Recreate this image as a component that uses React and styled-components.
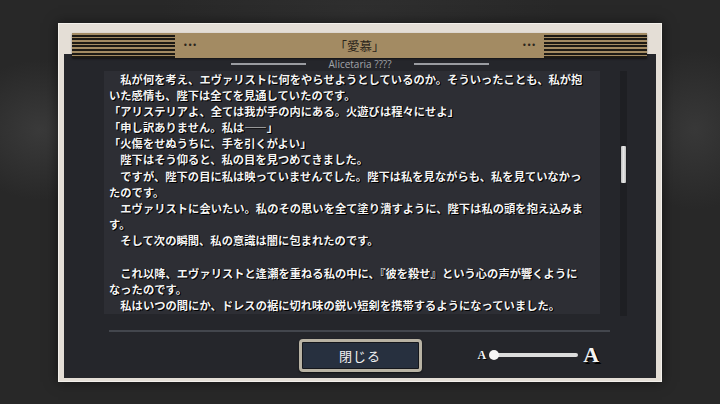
import React from "react";
import styled, { createGlobalStyle } from "styled-components";

const lines = [
  "　私が何を考え、エヴァリストに何をやらせようとしているのか。そういったことも、私が抱",
  "いた感情も、陛下は全てを見通していたのです。",
  "「アリステリアよ、全ては我が手の内にある。火遊びは程々にせよ」",
  "「申し訳ありません。私は――」",
  "「火傷をせぬうちに、手を引くがよい」",
  "　陛下はそう仰ると、私の目を見つめてきました。",
  "　ですが、陛下の目に私は映っていませんでした。陛下は私を見ながらも、私を見ていなかっ",
  "たのです。",
  "　エヴァリストに会いたい。私のその思いを全て塗り潰すように、陛下は私の頭を抱え込みま",
  "す。",
  "　そして次の瞬間、私の意識は闇に包まれたのです。",
  "",
  "　これ以降、エヴァリストと逢瀬を重ねる私の中に、『彼を殺せ』という心の声が響くように",
  "なったのです。",
  "　私はいつの間にか、ドレスの裾に切れ味の鋭い短剣を携帯するようになっていました。",
];

const App = () => {
  return (
    <Page>
      <GlobalStyle />
      <Frame>
        <TitleBar>
          <Stripes />
          <Dots>•••</Dots>
          <Title>「愛慕」</Title>
          <Dots>•••</Dots>
          <Stripes />
        </TitleBar>
        <Panel>
          <SubTitle>
            <SubLine />
            <span>Alicetaria ????</span>
            <SubLine />
          </SubTitle>
          <MainRow>
            <TextArea>
              {lines.map((l, i) => (
                <Line key={i}>{l || "\u00a0"}</Line>
              ))}
            </TextArea>
            <Track>
              <Thumb $offset={75} />
            </Track>
          </MainRow>
          <Divider />
          <Footer>
            <span />
            <CloseBtn>閉じる</CloseBtn>
            <Slider>
              <SmallA>A</SmallA>
              <Rail>
                <Knob />
              </Rail>
              <BigA>A</BigA>
            </Slider>
          </Footer>
        </Panel>
      </Frame>
    </Page>
  );
};

export default App;

const GlobalStyle = createGlobalStyle`
  html, body {
    margin: 0;
    padding: 0;
  }
  body {
    width: 720px;
    height: 404px;
    overflow: hidden;
    background:
      radial-gradient(ellipse 80px 70px at 40px 130px, #3a3a3a, transparent),
      radial-gradient(ellipse 70px 80px at 695px 130px, #383838, transparent),
      radial-gradient(ellipse 200px 60px at 360px 10px, #2f2f2f, transparent),
      #282828;
    font-family: "Noto Sans CJK JP", "Noto Sans", sans-serif;
  }
`;

const Page = styled.div`
  width: 720px;
  height: 404px;
  display: flex;
  justify-content: center;
  align-items: center;
`;

const Frame = styled.div`
  width: 604px;
  height: 359px;
  box-sizing: border-box;
  background: #e4ded6;
  border: 1px solid #f3f0eb;
  box-shadow: 0 0 12px rgba(0, 0, 0, 0.5);
  padding: 9px 5px 3px 5px;
  display: flex;
  flex-direction: column;
`;

const TitleBar = styled.div`
  position: relative;
  z-index: 1;
  height: 25px;
  margin: 0 9px -4px 8px;
  background: #a38b63;
  border-radius: 1px;
  box-shadow: 0 1px 2px rgba(0, 0, 0, 0.5);
  display: flex;
  align-items: center;
`;

const Stripes = styled.div`
  width: 103px;
  height: 100%;
  background: repeating-linear-gradient(
    to bottom,
    #a38b63 0px,
    #a38b63 1.6px,
    #1d1a15 1.6px,
    #1d1a15 3.6px
  );
`;

const Dots = styled.div`
  width: 20px;
  padding: 0 5px;
  font-size: 8px;
  color: #2b261d;
  font-family: "DejaVu Sans", sans-serif;
  text-align: center;
`;

const Title = styled.div`
  flex: 1;
  text-align: center;
  font-size: 12.5px;
  color: #2a241a;
  font-family: "Noto Sans CJK JP", sans-serif;
`;

const Panel = styled.div`
  flex: 1;
  background: #25262b;
  padding-top: 4px;
  display: flex;
  flex-direction: column;
`;

const SubTitle = styled.div`
  height: 13px;
  display: flex;
  justify-content: center;
  align-items: center;
  gap: 23px;
  font-family: "Open Sans", "Liberation Sans", sans-serif;
  font-size: 10px;
  color: #a3a5aa;
`;

const SubLine = styled.div`
  width: 75px;
  height: 2px;
  background: #9a9ca1;
`;

const MainRow = styled.div`
  display: flex;
  padding-left: 40px;
  gap: 20px;
`;

const TextArea = styled.div`
  width: 496px;
  height: 243px;
  box-sizing: border-box;
  padding-left: 5px;
  background: #2d2e34;
  overflow: hidden;
`;

const Line = styled.div`
  height: 16.2px;
  line-height: 16.2px;
  white-space: nowrap;
  font-size: 11.3px;
  font-weight: 700;
  color: #f4f4f4;
  text-shadow: 1px 1px 0 #000, 1px 0 0 #000;
  font-family: "Noto Sans CJK JP", sans-serif;
`;

const Track = styled.div`
  width: 7px;
  height: 245px;
  background: #1e1f23;
  display: flex;
  flex-direction: column;
  align-items: center;
`;

const Thumb = styled.div`
  margin-top: ${(p) => p.$offset}px;
  width: 5px;
  height: 37px;
  border-radius: 1px;
  background: linear-gradient(to right, #bdbdbd, #e6e6e6, #bdbdbd);
`;

const Divider = styled.div`
  margin: 14px 0 0 45px;
  width: 501px;
  height: 2px;
  background: #43464d;
`;

const Footer = styled.div`
  margin-top: 7px;
  display: grid;
  grid-template-columns: 1fr auto 1fr;
  align-items: center;
`;

const CloseBtn = styled.button`
  width: 123px;
  height: 33px;
  box-sizing: border-box;
  border: 3px solid #b9b3a4;
  border-radius: 4px;
  background: #27303f;
  box-shadow: inset 0 0 0 1px #15171c, 0 1px 2px rgba(0, 0, 0, 0.6);
  color: #f2f2f2;
  font-size: 13px;
  letter-spacing: 1px;
  font-family: "Noto Sans CJK JP", sans-serif;
  padding: 0;
`;

const Slider = styled.div`
  justify-self: start;
  margin-left: 56px;
  display: flex;
  align-items: center;
`;

const SmallA = styled.span`
  font-family: "Liberation Serif", serif;
  font-weight: 700;
  font-size: 12px;
  color: #f4f4f4;
  text-shadow: 1px 1px 0 #000;
  margin-right: 4px;
`;

const Rail = styled.div`
  width: 88px;
  height: 4px;
  border-radius: 2px;
  background: #dcdcdc;
  display: flex;
  align-items: center;
`;

const Knob = styled.div`
  width: 10px;
  height: 10px;
  border-radius: 50%;
  background: #f5f5f5;
  margin-left: -1px;
`;

const BigA = styled.span`
  font-family: "Liberation Serif", serif;
  font-weight: 700;
  font-size: 22px;
  color: #f4f4f4;
  text-shadow: 2px 2px 0 #000;
  margin-left: 5px;
  line-height: 1;
`;
